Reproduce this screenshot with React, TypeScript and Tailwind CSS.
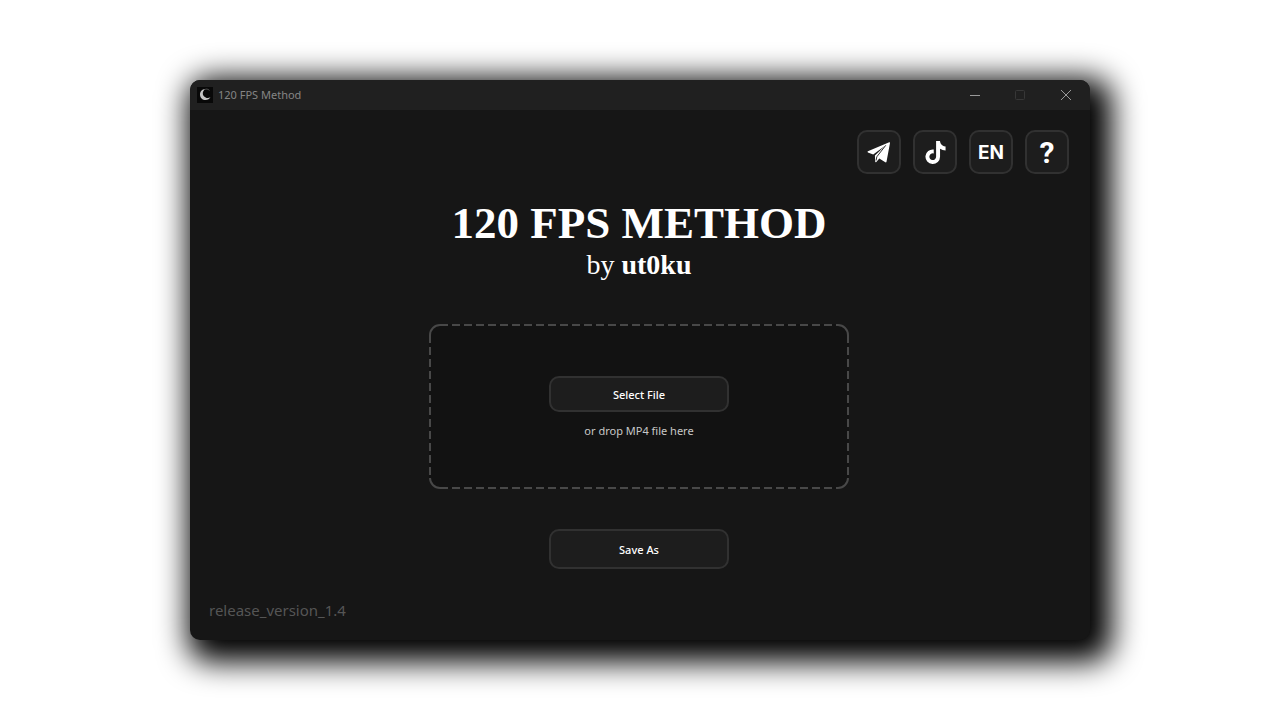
import type { ReactNode } from "react";
import { FaTiktok } from "react-icons/fa6";

const tile =
  "flex size-11 items-center justify-center rounded-[10px] border-2 border-[#313131] bg-[#1d1d1d] text-white";
const action =
  "w-45 rounded-[10px] border-2 border-[#313131] bg-[#1d1d1d] pt-px text-[11px] leading-4 font-medium text-white";

function Tile({ label, children }: { label: string; children: ReactNode }) {
  return (
    <button type="button" aria-label={label} className={tile}>
      {children}
    </button>
  );
}

function MoonLogo() {
  return (
    <svg className="size-4" viewBox="0 0 16 16" aria-hidden="true">
      <rect width="16" height="16" fill="#080808" />
      <path
        d="M8.200 2C5 2.200 3 4.800 3 7.500c0 3.200 2.500 5.600 5.600 5.600 2.200 0 4-1.200 4.900-3-1.100.9-2.600 1.200-3.900.8C7 10.100 5.700 8.300 5.800 6.300c.1-1.800.9-3.200 2.400-4.300Z"
        fill="#c4c4c4"
      />
      <path d="M8.200 2.300c1.600-.5 3.200 0 4.200 1.100" fill="none" stroke="#6a6a6a" strokeWidth=".8" />
    </svg>
  );
}

function DashedFrame() {
  return (
    <svg
      className="pointer-events-none absolute inset-0 size-full overflow-visible"
      fill="none"
      stroke="#484848"
      strokeWidth="2"
      aria-hidden="true"
    >
      <svg x="11" className="overflow-visible">
        <line x1="0" y1="1" x2="398" y2="1" strokeDasharray="8 4" />
      </svg>
      <svg x="11" y="100%" className="overflow-visible">
        <line x1="0" y1="-1" x2="398" y2="-1" strokeDasharray="8 4" />
      </svg>
      <line x1="1" y1="11" x2="1" y2="154" strokeDasharray="8 4" />
      <svg x="100%" className="overflow-visible">
        <line x1="-1" y1="11" x2="-1" y2="154" strokeDasharray="8 4" />
        <path d="M-11 1A10 10 0 0 1-1 11" />
      </svg>
      <path d="M1 11A10 10 0 0 1 11 1" />
      <svg y="100%" className="overflow-visible">
        <path d="M1-11A10 10 0 0 0 11-1" />
      </svg>
      <svg x="100%" y="100%" className="overflow-visible">
        <path d="M-11-1A10 10 0 0 0-1-11" />
      </svg>
    </svg>
  );
}

export default function App() {
  return (
    <div className="flex min-h-screen items-center justify-center bg-white pl-px font-['Noto_Sans',sans-serif]">
      <div className="flex w-full max-w-[900px] flex-col overflow-hidden rounded-[10px] bg-[#161616] shadow-[10px_10px_30px_12px_#000]">
        <header className="flex h-[30px] items-center bg-[#202020] pl-[7px]">
          <MoonLogo />
          <span className="ml-[5px] flex-1 text-[11px] leading-4 text-[#858585]">120 FPS Method</span>
          <div className="flex pb-px">
            <button type="button" aria-label="Minimize" className="flex h-7 w-[45px] items-center justify-center">
              <svg width="10" height="10" aria-hidden="true">
                <path d="M0 5.500h10" stroke="#999" />
              </svg>
            </button>
            <button type="button" aria-label="Maximize" className="flex h-7 w-[45px] items-center justify-center">
              <svg width="10" height="10" aria-hidden="true">
                <rect x=".5" y=".5" width="9" height="9" rx="1" fill="none" stroke="#373737" />
              </svg>
            </button>
            <button type="button" aria-label="Close" className="flex h-7 w-12 items-center justify-center">
              <svg width="10" height="10" aria-hidden="true">
                <path d="M0 0l10 10M10 0L0 10" stroke="#999" />
              </svg>
            </button>
          </div>
        </header>

        <main className="flex flex-col items-center pt-5 pr-[21px] pb-[18px] pl-[19px]">
          <nav className="flex gap-3 self-end">
            <Tile label="Telegram">
              <svg width="24" height="24" viewBox="0 0 24 24" fill="currentColor" aria-hidden="true">
                <path d="M22.200 2.200.9 11.300c-.5.2-.5.900 0 1.100L6.200 14.600 18.800 5.300 7.900 15.400l.3 6.200c0 .7.700.8 1.100.4l3-3.500 6 3.800c.5.3 1.100.1 1.200-.5L23 2.900c.1-.6-.3-.9-.8-.7Z" />
                <path d="M18.800 5.300 9.800 16.800 9.100 20.500" fill="none" stroke="#1d1d1d" strokeWidth=".9" />
              </svg>
            </Tile>
            <Tile label="TikTok">
              <FaTiktok size={23} />
            </Tile>
            <Tile label="Language: English">
              <span className="pt-px font-['Inter',sans-serif] text-[19px] leading-6 font-bold">EN</span>
            </Tile>
            <Tile label="Help">
              <span className="pt-px font-['Roboto',sans-serif] text-[30px] leading-6 font-bold">?</span>
            </Tile>
          </nav>

          <h1 className="mt-[22px] font-['Liberation_Serif',serif] text-[45px] leading-[54px] font-bold text-white">
            120 FPS METHOD
          </h1>
          <p className="font-['Liberation_Serif',serif] text-[28px] leading-[30px] text-white">
            by <strong>ut0ku</strong>
          </p>

          <section className="relative mt-11 flex h-[165px] w-full max-w-[420px] flex-col items-center rounded-xl bg-[#121212] pt-[52px]">
            <DashedFrame />
            <button type="button" className={`${action} h-9`}>
              Select File
            </button>
            <p className="mt-[11px] text-[11px] leading-4 text-[#c8c8c8]">or drop MP4 file here</p>
          </section>

          <button type="button" className={`${action} mt-10 h-10`}>
            Save As
          </button>
          <p className="mt-[29px] self-start text-[15px] leading-6 text-[#555]">release_version_1.4</p>
        </main>
      </div>
    </div>
  );
}
